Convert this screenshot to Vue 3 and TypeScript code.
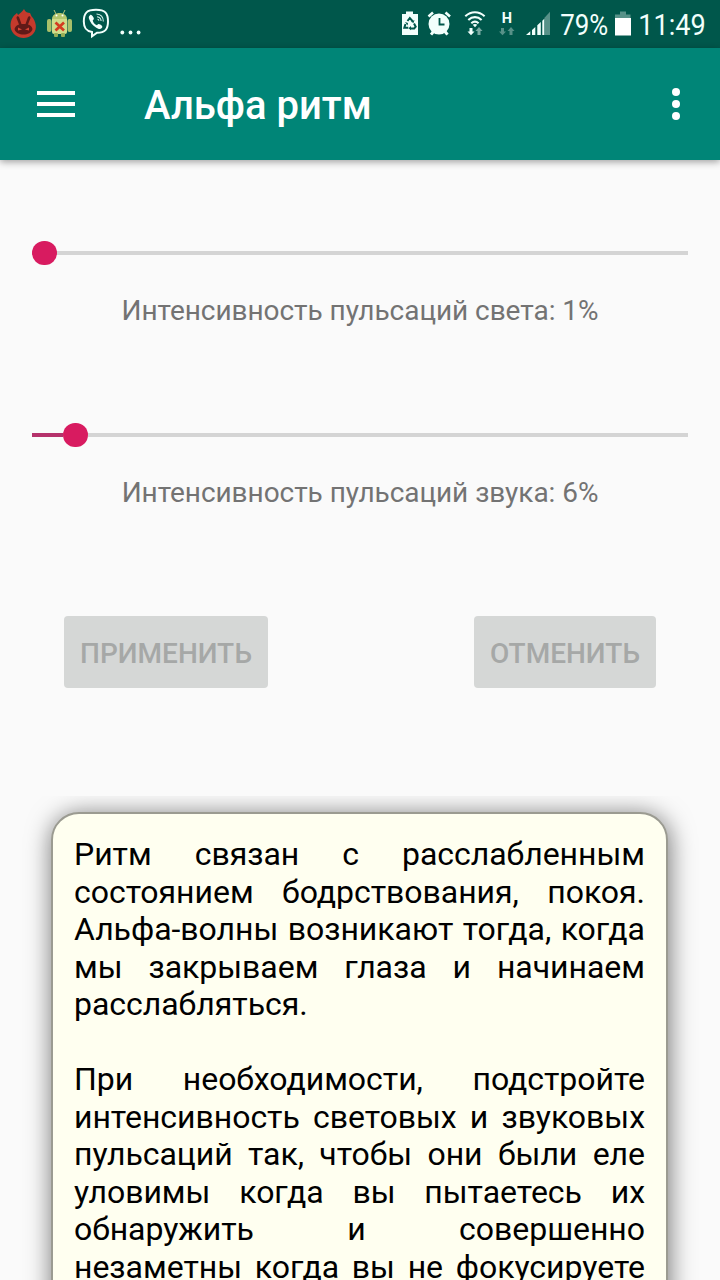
<script setup lang="ts">
interface Slider {
  label: string
  value: number
  fill: number
}

const sliders: Slider[] = [
  { label: 'Интенсивность пульсаций света', value: 1, fill: 0 },
  { label: 'Интенсивность пульсаций звука', value: 6, fill: 31 },
]

const paragraphs: string[] = [
  'Ритм связан с расслабленным состоянием бодрствования, покоя. Альфа-волны возникают тогда, когда мы закрываем глаза и начинаем расслабляться.',
  'При необходимости, подстройте интенсивность световых и звуковых пульсаций так, чтобы они были еле уловимы когда вы пытаетесь их обнаружить и совершенно незаметны когда вы не фокусируете',
]
</script>

<template>
  <div class="screen">
    <div class="status">
      <svg class="status-left" width="160" height="48" viewBox="0 0 160 48">
        <path d="M24 9c1 3 4 4 6 4 1 2 1 3 3 5 4 6 4 13-1 17-5 4-12 4-17 0-5-4-6-12-2-18 1-2 3-3 4-4l1 2c2-2 4-3 6-6z" fill="#c53a2c" />
        <path d="M14.500 29c1-3 3-4 4.500-4.500l-2.500-6.500c0-2 1.500-2.500 2.500-1l2.500 7h4l2.500-7c1-1.500 2.500-1 2.500 1L28 24.500c2 .500 4 2 4.500 4.500-1 4-5 5.500-9 5.500s-8-1.500-9-5.500z" fill="#611a18" />
        <path d="M18 27.500l4 2-4 1zM29 27.500l-4 2 4 1z" fill="#d64535" />
        <path d="M54 10l2 4M65 10l-2 4" stroke="#b8c679" stroke-width="1" />
        <path d="M52 19c0-8 15-8 15 0z" fill="#b4c66e" />
        <rect x="47" y="19" width="4.500" height="13" rx="2" fill="#a9c06a" />
        <rect x="67.500" y="19" width="4.500" height="13" rx="2" fill="#a9c06a" />
        <path d="M52 19h15v13q0 2-2 2H54q-2 0-2-2z" fill="#cfdc8a" />
        <rect x="54" y="33" width="4" height="4" rx="1" fill="#94ad57" />
        <rect x="61" y="33" width="4" height="4" rx="1" fill="#94ad57" />
        <circle cx="56.500" cy="15.500" r="1" fill="#fff" /><circle cx="62.500" cy="15.500" r="1" fill="#fff" />
        <path d="M55.500 22.500l8.500 8M64 22.500l-8.500 8" stroke="#d43b20" stroke-width="2.700" />
        <path d="M96 9.800c9 0 12 3 12 11.800 0 8-3 11-11 11.200l-5 3.500v-4.200c-6-1-8.200-4-8.200-10.500 0-8.800 3.200-11.800 12.200-11.800z" fill="none" stroke="#f2fffc" stroke-width="2" />
        <path d="M90 15.200c1-.8 2-.2 3.500 2.300.8 1.500.2 2-.8 3 .8 2.500 2 3.800 4.300 4.700 1-1.300 1.800-1.700 3.300-.7 2.300 1.600 2.500 2.300 1.500 3.500-1.500 1.800-3 1.200-5.500-.2-4-2.500-6-5.300-7.300-9-.4-1.600-.2-2.700 1-3.600z" fill="#f2fffc" />
        <path d="M96.500 14c4.500.3 6.800 3 6.800 7.500M97 16.700c2.800.3 4 1.800 4.100 4.300M97.500 19.200c1 0 1.300.6 1.400 1.600" fill="none" stroke="#d5f0eb" stroke-width="1.100" />
        <g fill="#f2fffc"><circle cx="122.300" cy="32.500" r="1.900" /><circle cx="130.500" cy="32.500" r="1.900" /><circle cx="138.600" cy="32.500" r="1.900" /></g>
      </svg>
      <svg width="330" height="48" viewBox="390 0 330 48">
        <path d="M406 11.500h7v2.500h5v21h-16V14h4z" fill="#f2fffc" />
        <g fill="none" stroke="#00574b" stroke-width="2">
          <path d="M407.500 21l2.300-3 2.800 3.200M405.500 24l-1.200 3.800h4M414 23.500l1.700 3.200-1.500 1.700h-3.500" />
        </g>
        <path d="M405 22l3 1-.5 2.500zM411 26l-2.500 2.300 2.500 2zM414.500 20l-1 3-2.600-1.300z" fill="#00574b" />
        <circle cx="439" cy="24" r="10.500" fill="#f2fffc" />
        <path d="M439.500 18v6.500h5" fill="none" stroke="#00574b" stroke-width="1.800" />
        <path d="M428.500 16.500l4.500-4M450 16.500l-4.500-4" stroke="#f2fffc" stroke-width="2.600" />
        <path d="M434 31l-3 3.600M444.500 31l3 3.600" stroke="#f2fffc" stroke-width="3" />
        <g fill="none" stroke="#f2fffc" stroke-width="2.100">
          <path d="M465.300 16.200c5.800-5.300 13.500-5.300 19.300 0M468.300 19.900c4-3.700 9.300-3.700 13.300 0M471.300 23.300c2.300-2 5-2 7.300 0" />
        </g>
        <path d="M472.700 24.800q2.300-1.500 4.600 0L475 27.300z" fill="#f2fffc" />
        <path d="M469.500 28h3v3.500h2l-3.500 3.700-3.500-3.700h2z" fill="#f2fffc" />
        <path d="M477.500 35v-4h-2l3.500-4 3.500 4h-2v4z" fill="#78aaa2" />
        <text x="506.800" y="23.200" class="network" text-anchor="middle">H</text>
        <path d="M501 28h3v3.500h2l-3.500 3.700-3.500-3.700h2zM509.500 35v-4h-2l3.500-4 3.500 4h-2v4z" fill="#579188" />
        <path d="M526 35l4.300-3.800V35zM532 30l3.300-3V35H532zM537.300 25.300l3.500-3.300v13h-3.500zM542.300 20.700l2.200-2.200V35h-2.200z" fill="#f2fffc" />
        <path d="M544.500 17.800l5.500-6V35h-5.500z" fill="#579188" />
        <text x="560.300" y="35" class="clock" textLength="48" lengthAdjust="spacingAndGlyphs">79%</text>
        <path d="M620 11.500h6v3h4.500V18h-15.500v-3.500h5z" fill="#579188" />
        <rect x="615" y="18" width="16" height="17.500" fill="#fff" />
        <text x="638.300" y="35" class="clock" textLength="67.500" lengthAdjust="spacingAndGlyphs">11:49</text>
      </svg>
    </div>

    <header class="toolbar">
      <svg class="menu" width="38" height="26" viewBox="0 0 38 26">
        <path d="M0 2h38M0 13h38M0 24h38" stroke="#fff" stroke-width="4" />
      </svg>
      <h1 class="title">Альфа ритм</h1>
      <svg width="8" height="34" viewBox="0 0 8 34" fill="#fff">
        <circle cx="4" cy="5" r="4" /><circle cx="4" cy="17" r="4" /><circle cx="4" cy="29" r="4" />
      </svg>
    </header>

    <main class="content">
      <section v-for="s in sliders" :key="s.label" class="control">
        <div class="slider">
          <div class="filled" :style="{ width: s.fill + 'px' }"></div>
          <div class="thumb"></div>
          <div class="rest"></div>
        </div>
        <div class="label">{{ s.label }}: {{ s.value }}%</div>
      </section>

      <div class="actions">
        <button class="btn apply" disabled>ПРИМЕНИТЬ</button>
        <button class="btn cancel" disabled>ОТМЕНИТЬ</button>
      </div>

      <div class="card-area">
        <article class="card">
          <p v-for="p in paragraphs" :key="p">{{ p }}</p>
        </article>
      </div>
    </main>
  </div>
</template>

<style>
html,
body {
  margin: 0;
  overflow: hidden;
}
</style>

<style scoped>
.screen {
  display: flex;
  flex-direction: column;
  width: 720px;
  height: 1280px;
  overflow: hidden;
  background: #fafafa;
  font-family: Roboto, "Noto Sans", sans-serif;
}
.status {
  display: flex;
  justify-content: space-between;
  flex: none;
  height: 48px;
  background: #00574b;
}
.clock {
  font-size: 30px;
  fill: #f2fffc;
}
.network {
  font-size: 14.5px;
  font-weight: 700;
  fill: #f2fffc;
}
.toolbar {
  display: flex;
  align-items: center;
  flex: none;
  box-sizing: border-box;
  height: 112px;
  padding: 0 40px 0 37px;
  background: #008577;
  box-shadow: 0 2px 7px rgba(0, 0, 0, 0.36);
}
.title {
  flex: 1;
  margin: 4px 0 0 69px;
  color: #fff;
  font-size: 40px;
  font-weight: 500;
  line-height: 48px;
}
.content {
  display: flex;
  flex-direction: column;
  flex: 1;
  min-height: 0;
  padding-top: 80px;
}
.control {
  height: 182px;
  flex: none;
}
.slider {
  display: flex;
  align-items: center;
  height: 26px;
  margin: 0 32px;
}
.filled {
  height: 4px;
  background: #b5326b;
}
.thumb {
  width: 24.5px;
  height: 24.5px;
  border-radius: 50%;
  background: #d81b60;
}
.rest {
  flex: 1;
  height: 4px;
  background: #d4d4d4;
}
.label {
  margin-top: 28px;
  text-align: center;
  color: #737373;
  font-size: 28px;
  line-height: 33px;
  letter-spacing: -0.05px;
}
.actions {
  display: flex;
  justify-content: space-between;
  flex: none;
  margin: 12px 64px 0;
}
.btn {
  height: 72px;
  padding: 3px 0 0;
  border: 0;
  border-radius: 4px;
  background: #d5d7d6;
  color: #a6a8a7;
  font-family: inherit;
  font-size: 28px;
  font-weight: 500;
  line-height: 69px;
}
.apply {
  width: 204px;
}
.cancel {
  width: 182px;
}
.card-area {
  flex: 1;
  min-height: 0;
  margin-top: 108px;
  padding: 16px 52px 0 51px;
  overflow: hidden;
}
.card {
  box-sizing: border-box;
  height: 700px;
  padding: 22px 21px 0 21px;
  border: 2px solid #9b9b91;
  border-radius: 28px;
  background: #fffff0;
  box-shadow: 1px 3px 24px 1px rgba(0, 0, 0, 0.52);
  color: #000;
  font-size: 32px;
  line-height: 37.5px;
  letter-spacing: -0.03px;
  text-align: justify;
}
.card p {
  margin: 0 0 37.5px;
}
.card p:last-child {
  text-align-last: justify;
}
</style>
